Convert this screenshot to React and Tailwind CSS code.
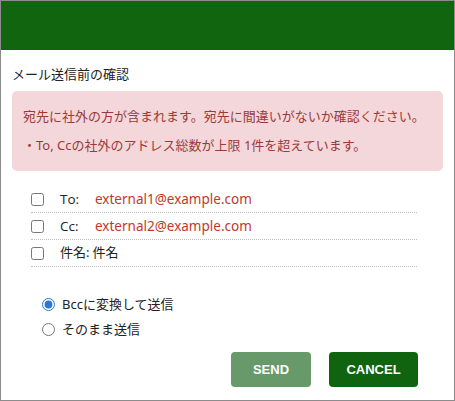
import { useState } from 'react'

const rows = [
  { key: 'to', label: 'To:', value: 'external1@example.com', external: true },
  { key: 'cc', label: 'Cc:', value: 'external2@example.com', external: true },
  { key: 'subject', label: '件名:', value: '件名', external: false },
]

function App() {
  const [mode, setMode] = useState('bcc')

  return (
    <div
      className="flex h-[401px] w-[455px] flex-col border border-[#8c8c8c] bg-white text-[#222]"
      style={{ fontFamily: '"Noto Sans", "Noto Sans CJK JP", sans-serif' }}
    >
      <div className="h-[49px] shrink-0 bg-[#12650f]" />

      <div className="px-[11px]">
        <h2 className="mt-[14px] text-[13px] leading-[20px] font-normal text-[#222]">メール送信前の確認</h2>

        <div className="mt-[7px] h-[80px] rounded-[5px] bg-[#f4d7da] px-[11px] pt-[15px] text-[13px] leading-[20px] text-[#9b3a3a]">
          <p>宛先に社外の方が含まれます。宛先に間違いがないか確認ください。</p>
          <p className="mt-[9px]">・To, Ccの社外のアドレス総数が上限 1件を超えています。</p>
        </div>
      </div>

      <div className="ml-[30px] mt-[15px] w-[386px]">
        {rows.map((row) => (
          <label
            key={row.key}
            className="flex h-[27px] items-center border-b border-dotted border-[#bdbdbd] text-[13px] font-normal"
          >
            <input type="checkbox" className="h-[13px] w-[13px] accent-[#0b5ed7]" />
            <span
              className={row.external ? 'ml-[16px] w-[35px] text-[13.5px] text-[#222]' : 'ml-[16px] mr-[3px] text-[#222]'}
              style={row.external ? { fontFamily: '"Open Sans", sans-serif' } : undefined}
            >
              {row.label}
            </span>
            <span className={row.external ? 'text-[13.5px] text-[#c0392b]' : 'text-[#222]'}>{row.value}</span>
          </label>
        ))}
      </div>

      <div className="ml-[41px] mt-[28px] flex flex-col gap-[7px] text-[13px] leading-[18px]">
        <label className="flex items-center gap-[7px]">
          <input
            type="radio"
            name="mode"
            checked={mode === 'bcc'}
            onChange={() => setMode('bcc')}
            className="h-[13px] w-[13px] accent-[#2b78d4]"
          />
          Bccに変換して送信
        </label>
        <label className="flex items-center gap-[7px]">
          <input
            type="radio"
            name="mode"
            checked={mode === 'asis'}
            onChange={() => setMode('asis')}
            className="h-[13px] w-[13px] accent-[#2b78d4]"
          />
          そのまま送信
        </label>
      </div>

      <div className="mr-[36px] mt-[14px] flex justify-end gap-[18px]">
        <button
          className="h-[35px] w-[80px] rounded-[4px] bg-[#68996a] text-[13px] font-bold text-white"
          style={{ fontFamily: '"Liberation Sans", Arial, sans-serif' }}
        >
          SEND
        </button>
        <button
          className="h-[35px] w-[89px] rounded-[4px] bg-[#10640f] text-[13px] font-bold text-white"
          style={{ fontFamily: '"Liberation Sans", Arial, sans-serif' }}
        >
          CANCEL
        </button>
      </div>
    </div>
  )
}

export default App
